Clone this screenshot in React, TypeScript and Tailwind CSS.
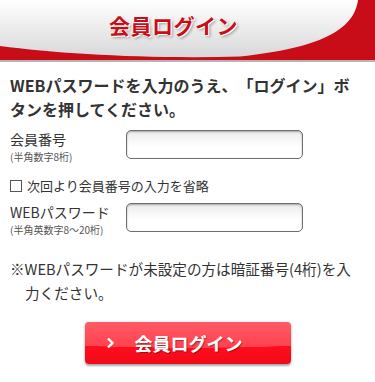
const font = { fontFamily: '"Noto Sans CJK JP", "Noto Sans", sans-serif' };

const Header = () => {
  return (
    <div className="relative h-[62px] w-full">
      <svg className="absolute inset-0" width="375" height="62" viewBox="0 0 375 62">
        <defs>
          <linearGradient id="hg" x1="0" y1="0" x2="0" y2="1">
            <stop offset="0" stopColor="#ffffff" />
            <stop offset="1" stopColor="#d8d8da" />
          </linearGradient>
        </defs>
        <rect width="375" height="60" fill="#c90d18" />
        <path d="M0 0 H358 C354 30 320 48 240 56.5 C150 59 60 54 0 46 Z" fill="url(#hg)" />
        <rect y="60" width="375" height="2" fill="#b4b4b4" />
      </svg>
      <div className="relative flex h-[52px] items-center justify-center pr-[28px]">
        <h1 className="text-[21px] font-bold tracking-[0.5px] text-[#c90d18] [text-shadow:0_0_1px_#fff,0_0_2px_#fff,1px_1px_0_#fff,2px_2px_3px_rgba(0,0,0,0.35)]">
          会員ログイン
        </h1>
      </div>
    </div>
  );
};

const Field = ({ label, sub }: { label: string; sub: string }) => {
  return (
    <div className="flex items-start">
      <div className="w-[116px]">
        <div className="text-[14px] leading-[19px] text-[#333]">{label}</div>
        <div className="text-[10px] leading-[15px] text-[#555]">{sub}</div>
      </div>
      <input
        type="text"
        className="h-[29px] w-[177px] rounded-[5px] border border-[#6e6e6e] bg-[linear-gradient(#ececec,#ffffff_60%)] shadow-[inset_0_1px_2px_rgba(0,0,0,0.3)] outline-none"
      />
    </div>
  );
};

export default function App() {
  return (
    <div className="h-[382px] w-[375px] overflow-hidden bg-white" style={font}>
      <Header />
      <div className="px-[10px]">
        <p className="mt-[11px] text-[16px] font-bold leading-[24px] text-[#333] [text-spacing-trim:space-all]">
          WEBパスワードを入力のうえ、「ログイン」ボ
          <br />
          タンを押してください。
        </p>

        <div className="mt-[9px]">
          <Field label="会員番号" sub="(半角数字8桁)" />
        </div>

        <label className="mt-[14px] flex h-[16px] items-center gap-[5px]">
          <input
            type="checkbox"
            className="h-[12px] w-[12px] appearance-none border border-[#555] bg-white"
          />
          <span className="text-[13px] text-[#333]">次回より会員番号の入力を省略</span>
        </label>

        <div className="mt-[9px]">
          <Field label="WEBパスワード" sub="(半角英数字8〜20桁)" />
        </div>

        <p className="mt-[20px] pl-[15px] indent-[-15px] text-[14.6px] leading-[24px] text-[#333] [text-spacing-trim:space-all]">
          ※WEBパスワードが未設定の方は暗証番号(4桁)を入
          <br />
          力ください。
        </p>

        <button
          type="button"
          className="mx-auto mt-[17px] flex h-[42px] w-[206px] items-center rounded-[4px] bg-[radial-gradient(ellipse_130%_62%_at_50%_0%,rgba(255,255,255,0.22)_0%,rgba(255,255,255,0.22)_98%,transparent_100%),linear-gradient(#ff2d3a,#ff0d1d_60%,#f00a18)] pl-[21px] shadow-[0_0_3px_rgba(0,140,140,0.3),0_2px_2px_rgba(0,0,0,0.3)]"
        >
          <svg width="9" height="12" viewBox="0 0 9 12">
            <polyline points="2,1.5 6.5,6 2,10.5" fill="none" stroke="#fff" strokeWidth="2.4" />
          </svg>
          <span className="ml-[20px] text-[18px] font-bold text-white [text-shadow:1px_1px_1px_rgba(0,0,0,0.35)]">
            会員ログイン
          </span>
        </button>
      </div>
    </div>
  );
}
